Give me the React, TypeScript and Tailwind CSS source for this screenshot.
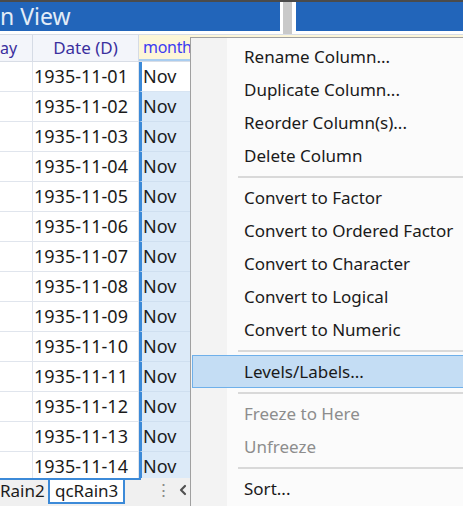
import React from "react";
import { ChevronLeft } from "lucide-react";

const dates = Array.from({ length: 14 }, (_, i) => `1935-11-${String(i + 1).padStart(2, "0")}`);

type Item = { label: string; disabled?: boolean; active?: boolean } | "sep";

const menu: Item[] = [
  { label: "Rename Column..." },
  { label: "Duplicate Column..." },
  { label: "Reorder Column(s)..." },
  { label: "Delete Column" },
  "sep",
  { label: "Convert to Factor" },
  { label: "Convert to Ordered Factor" },
  { label: "Convert to Character" },
  { label: "Convert to Logical" },
  { label: "Convert to Numeric" },
  "sep",
  { label: "Levels/Labels...", active: true },
  "sep",
  { label: "Freeze to Here", disabled: true },
  { label: "Unfreeze", disabled: true },
  "sep",
  { label: "Sort..." },
];

function TitleBar() {
  return (
    <div className="flex h-[34px] border-t-2 border-[#4b4b4b] bg-[#d4d4d4]">
      <div className="w-[283px] border-b-[3px] border-r-[3px] border-white bg-[#2265ba]">
        <div className="text-[23px] leading-[29px] text-[#e3ecf7]">n View</div>
      </div>
      <div className="w-[9px] bg-[#c9c9c9]" />
      <div className="flex-1 border-b-[3px] border-l-[4px] border-white bg-[#2265ba]" />
    </div>
  );
}

function Grid() {
  return (
    <div className="flex flex-col">
      <div className="flex h-[28px] border-y border-[#d8dde6] bg-[#f3f5fa] text-[16px]">
        <div className="w-[33px] overflow-hidden border-r border-[#d5dbe5] leading-[26px] text-[#3a2f9e]">
          ay
        </div>
        <div className="w-[106px] border-r border-[#d5dbe5] text-center text-[17px] leading-[26px] text-[#3a2f9e]">
          Date (D)
        </div>
        <div className="flex-1 border-b-2 border-[#a9cdf0] bg-[#fdf6d8] pl-[4px] leading-[24px] tracking-[-0.3px] text-[#3d3df2]">
          month
        </div>
      </div>
      {dates.map((d, i) => (
        <div key={d} className="flex h-[30px] text-[18px] text-[#1b1b1b]">
          <div className="w-[33px] border-b border-r border-[#e0e5ed] bg-white" />
          <div className="w-[106px] border-b border-r border-[#e0e5ed] bg-white pl-[1px] leading-[29px]">
            {d}
          </div>
          <div
            className={
              i === 0
                ? "flex-1 border-b border-l-[3px] border-b-[#d7e4f2] border-l-[#3c8ad8] bg-white pl-[1px] leading-[29px]"
                : "flex-1 border-b border-l-[3px] border-b-[#cfdff0] border-l-[#3c8ad8] bg-[#dceaf8] pl-[1px] leading-[29px]"
            }
          >
            Nov
          </div>
        </div>
      ))}
    </div>
  );
}

function Tabs() {
  return (
    <div className="absolute bottom-0 left-0 right-0 flex h-[28px] items-start bg-[#f0f0f0] text-[17px] text-[#1b1b1b]">
      <div className="h-[26px] w-[48px] shrink-0 border-t-2 border-[#3c8ad8] leading-[22px]">Rain2</div>
      <div className="h-[26px] shrink-0 border-2 border-[#3c8ad8] bg-white px-[5px] leading-[21px]">qcRain3</div>
      <div className="h-[2px] w-[16px] shrink-0 bg-[#3c8ad8]" />
      <div className="ml-[14px] shrink-0 leading-[24px] text-[#8a8a8a]">⋮</div>
      <ChevronLeft className="ml-[3px] mt-[4px] size-[16px] shrink-0 text-[#505050]" strokeWidth={3.2} />
    </div>
  );
}

function ContextMenu() {
  return (
    <div className="absolute left-[190px] top-[37px] h-[480px] w-[290px] border border-[#a0a0a0] bg-[#fbfbfb] pt-[2px] text-[17px]">
      <div className="relative">
        <div className="absolute bottom-[-40px] left-0 top-[-2px] w-[36px] bg-[#f3f3f3]" />
        {menu.map((it, i) =>
          it === "sep" ? (
            <div key={i} className="relative flex h-[9px] items-center pl-[47px]">
              <div className="h-[2px] flex-1 bg-[#d9d9d9]" />
            </div>
          ) : (
            <div
              key={i}
              className={
                it.active
                  ? "relative mx-[1px] h-[33px] border border-[#6fb0ea] bg-[#c4ddf4] pl-[51px] leading-[31px] text-[#1a1a1a]"
                  : it.disabled
                    ? "relative h-[33px] pl-[53px] leading-[33px] text-[#8d8d8d]"
                    : "relative h-[33px] pl-[53px] leading-[33px] text-[#1a1a1a]"
              }
            >
              {it.label}
            </div>
          ),
        )}
      </div>
    </div>
  );
}

export default function App() {
  return (
    <div
      className="relative h-[506px] w-[463px] overflow-hidden bg-white"
      style={{ fontFamily: '"Noto Sans", "Open Sans", sans-serif' }}
    >
      <TitleBar />
      <Grid />
      <Tabs />
      <ContextMenu />
    </div>
  );
}
